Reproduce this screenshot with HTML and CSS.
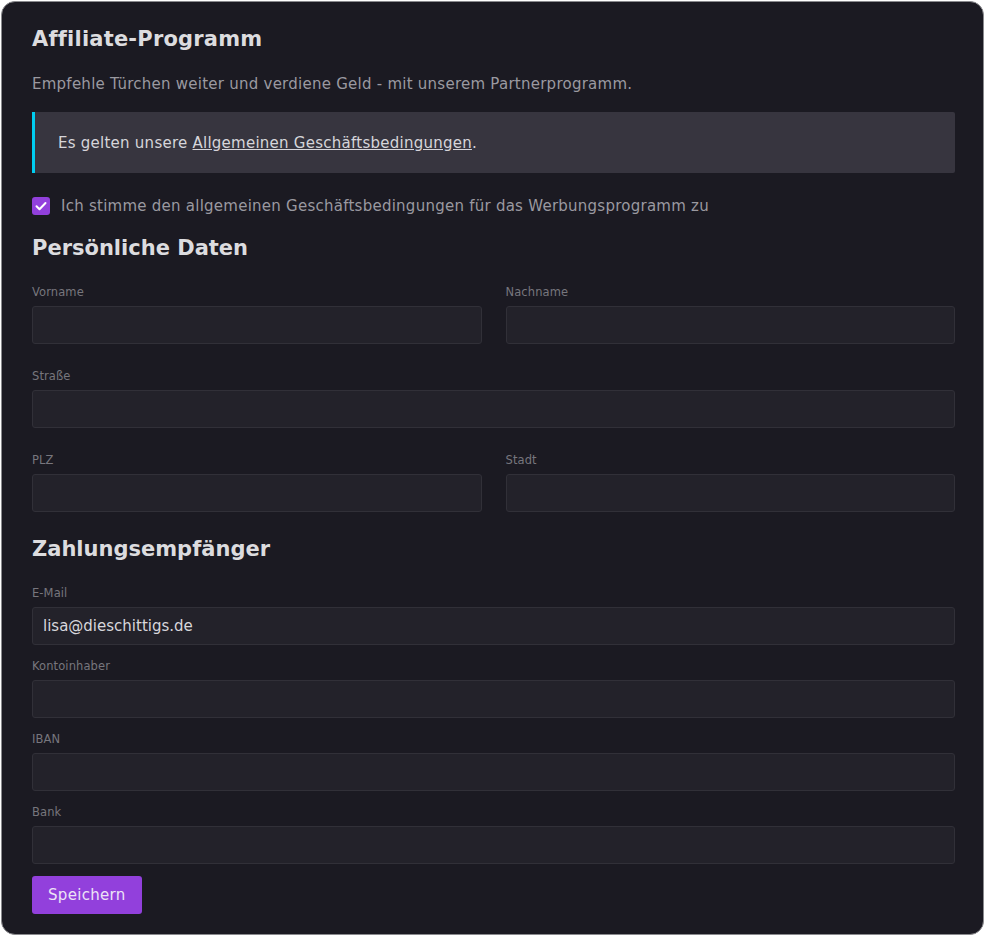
FILE: index.html
```html
<!DOCTYPE html>
<html lang="de">
<head>
    <meta charset="UTF-8">
    <meta name="viewport" content="width=device-width, initial-scale=1.0">
    <title>Affiliate-Programm</title>
    <link rel="stylesheet" href="styles.css">
</head>
<body>
    <div class="card">
        <h1>Affiliate-Programm</h1>
        <p class="intro">Empfehle Türchen weiter und verdiene Geld - mit unserem Partnerprogramm.</p>

        <div class="notice">
            Es gelten unsere <a href="#">Allgemeinen Geschäftsbedingungen</a>.
        </div>

        <label class="check">
            <span class="check-box">
                <svg viewBox="0 0 18 18" width="18" height="18">
                    <path d="M4.5 9.3l3 3 6-6.3" fill="none" stroke="#fff" stroke-width="2" stroke-linecap="round" stroke-linejoin="round"/>
                </svg>
            </span>
            Ich stimme den allgemeinen Geschäftsbedingungen für das Werbungsprogramm zu
        </label>

        <!-- Persönliche Daten -->
        <h2>Persönliche Daten</h2>
        <div class="form-grid">
            <div class="field">
                <label for="vorname">Vorname</label>
                <input type="text" id="vorname">
            </div>
            <div class="field">
                <label for="nachname">Nachname</label>
                <input type="text" id="nachname">
            </div>
            <div class="field full">
                <label for="strasse">Straße</label>
                <input type="text" id="strasse">
            </div>
            <div class="field">
                <label for="plz">PLZ</label>
                <input type="text" id="plz">
            </div>
            <div class="field">
                <label for="stadt">Stadt</label>
                <input type="text" id="stadt">
            </div>
        </div>

        <!-- Zahlungsempfänger -->
        <h2 class="payee-title">Zahlungsempfänger</h2>
        <div class="form-list">
            <div class="field">
                <label for="email">E-Mail</label>
                <input type="text" id="email" value="lisa@dieschittigs.de">
            </div>
            <div class="field">
                <label for="inhaber">Kontoinhaber</label>
                <input type="text" id="inhaber">
            </div>
            <div class="field">
                <label for="iban">IBAN</label>
                <input type="text" id="iban">
            </div>
            <div class="field">
                <label for="bank">Bank</label>
                <input type="text" id="bank">
            </div>
        </div>

        <button class="btn">Speichern</button>
    </div>
</body>
</html>
```

FILE: styles.css
```css
:root {
    --card-bg: #1b1a22;
    --input-bg: #23222a;
    --input-border: #313038;
    --notice-bg: #37353f;
    --accent: #00cdf0;
    --purple: #9240dc;
    --heading: #dcdcdf;
    --text: #9a99a0;
    --label: #77767d;
}

* {
    box-sizing: border-box;
    margin: 0;
    padding: 0;
}

body {
    background: #ffffff;
    padding: 1px;
    font-family: 'DejaVu Sans', 'Noto Sans', sans-serif;
}

.card {
    width: 983px;
    height: 934px;
    background: var(--card-bg);
    border: 1px solid #8a8a8e;
    border-radius: 14px;
    padding: 22px 28px 0 30px;
}

h1 {
    font-size: 21px;
    font-weight: 600;
    color: var(--heading);
    line-height: 30px;
    letter-spacing: 0.2px;
}

.intro {
    margin-top: 20px;
    font-size: 15px;
    letter-spacing: 0.25px;
    color: var(--text);
    line-height: 20px;
}

.notice {
    margin-top: 18px;
    height: 61px;
    background: var(--notice-bg);
    border-left: 3px solid var(--accent);
    border-radius: 0 2px 2px 0;
    padding: 0 23px;
    display: flex;
    align-items: center;
    font-size: 15px;
    letter-spacing: 0.25px;
    color: #d6d5da;
}

.notice a {
    color: #d6d5da;
    margin-left: 5px;
}

.check {
    margin-top: 24px;
    display: flex;
    align-items: center;
    gap: 11px;
    font-size: 15px;
    letter-spacing: 0.25px;
    color: var(--text);
}

.check-box {
    width: 18px;
    height: 18px;
    border-radius: 3px;
    background: var(--purple);
    display: flex;
}

h2 {
    margin-top: 18px;
    font-size: 21px;
    font-weight: 600;
    color: var(--heading);
    line-height: 30px;
}

.form-grid {
    margin-top: 22px;
    display: grid;
    grid-template-columns: 1fr 1fr;
    column-gap: 24px;
    row-gap: 25px;
}

.field.full {
    grid-column: 1 / -1;
}

.field label {
    display: block;
    font-size: 11.5px;
    letter-spacing: 0.1px;
    color: var(--label);
    line-height: 14px;
    margin-bottom: 7px;
}

.field input {
    display: block;
    width: 100%;
    height: 38px;
    background: var(--input-bg);
    border: 1px solid var(--input-border);
    border-radius: 3px;
    padding: 0 10px;
    color: #d8d7dc;
    font-family: inherit;
    font-size: 15px;
    outline: none;
}

.payee-title {
    margin-top: 22px;
}

.form-list {
    margin-top: 22px;
    display: flex;
    flex-direction: column;
    gap: 14px;
}

.btn {
    margin-top: 12px;
    height: 38px;
    padding: 0 16px;
    background: var(--purple);
    color: #ece4f6;
    border: none;
    border-radius: 3px;
    font-family: inherit;
    font-size: 15px;
    letter-spacing: 0.3px;
}
```
